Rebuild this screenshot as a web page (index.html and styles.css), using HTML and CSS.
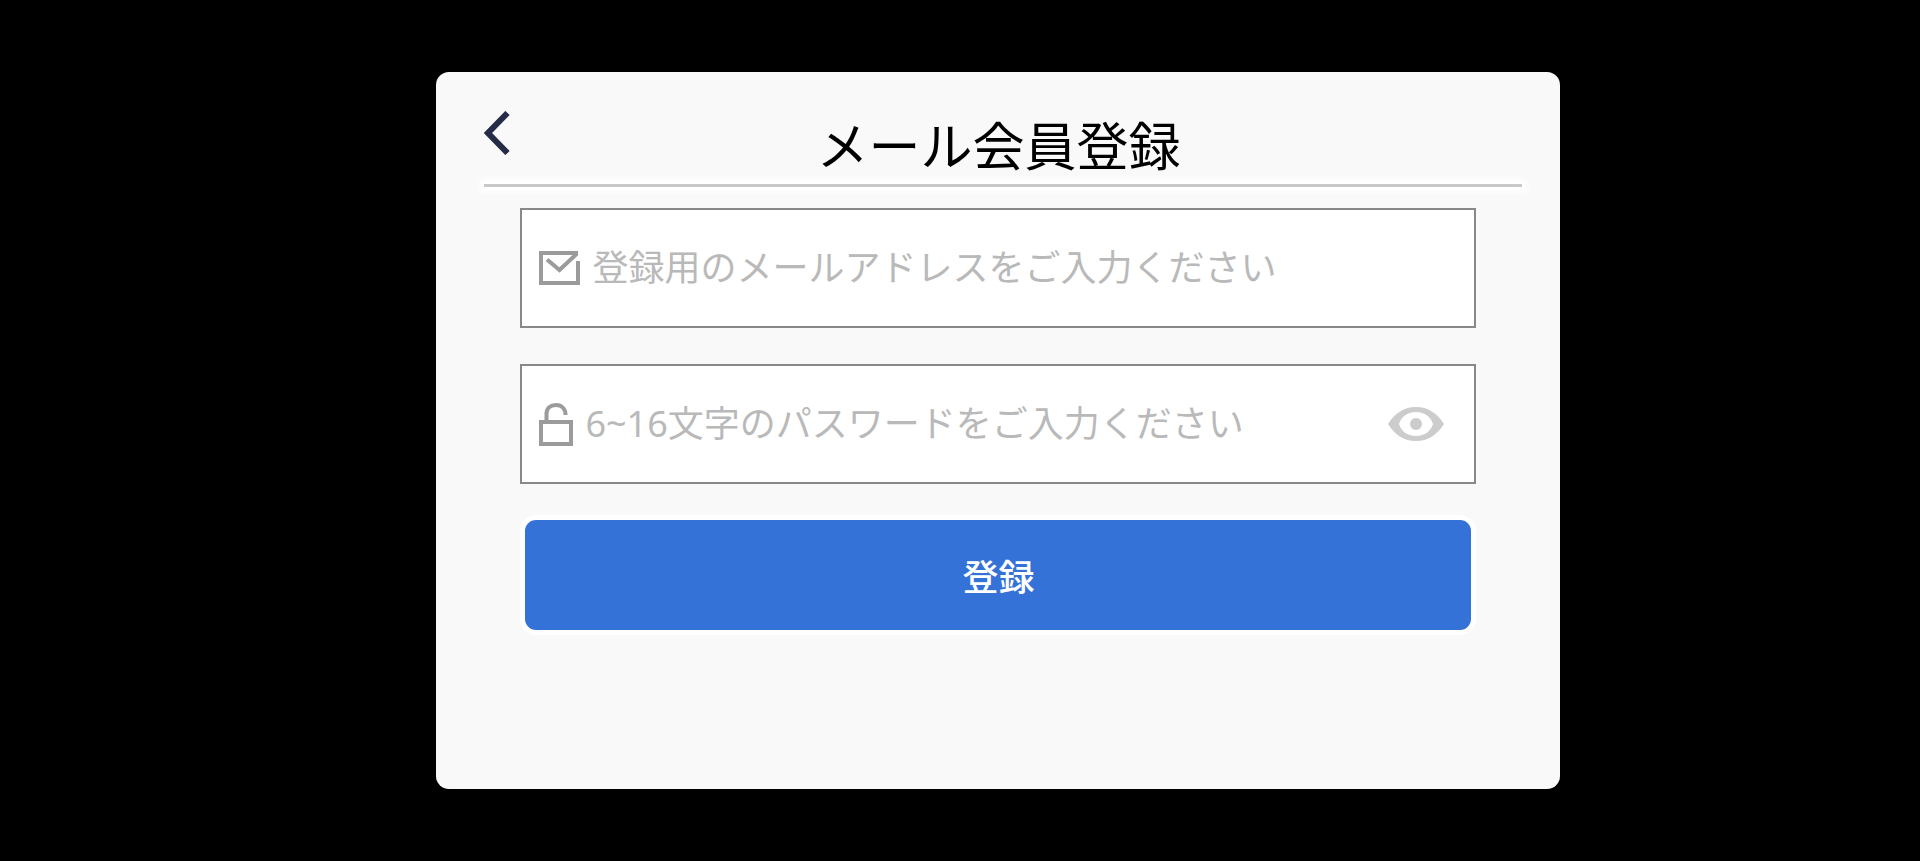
FILE: index.html
```html
<!DOCTYPE html>
<html lang="ja">
<head>
    <meta charset="UTF-8">
    <meta name="viewport" content="width=device-width, initial-scale=1.0">
    <title>メール会員登録</title>
    <link rel="stylesheet" href="styles.css">
</head>
<body>
    <main class="dialog">
        <header class="dialog-header">
            <button type="button" class="back-btn" aria-label="戻る">
                <svg width="26" height="44" viewBox="0 0 26 44">
                    <path d="M23.5 2 L4 22 L23.5 42" fill="none" stroke="#262b47" stroke-width="6"/>
                </svg>
            </button>
            <h1>メール会員登録</h1>
        </header>
        <hr class="divider">

        <form class="register-form">
            <!-- Mail address -->
            <div class="field">
                <label for="email" aria-label="メールアドレス">
                    <svg width="41" height="34" viewBox="0 0 41 34" fill="none" stroke="#9b9b9b" stroke-width="4">
                        <path d="M39 2 H2 V32 H39 V10"/>
                        <path d="M8 8.5 L20.5 19 L38 2.5"/>
                    </svg>
                </label>
                <input type="email" id="email" placeholder="登録用のメールアドレスをご入力ください">
            </div>

            <!-- Password -->
            <div class="field">
                <label for="password" aria-label="パスワード">
                    <svg width="34" height="43" viewBox="0 0 34 43" fill="none" stroke="#9b9b9b" stroke-width="4">
                        <rect x="2" y="19" width="30" height="22"/>
                        <path d="M7.5 18 V11 C7.5 5 11.5 2 17 2 C23 2 26.5 6 26.5 12"/>
                    </svg>
                </label>
                <input type="password" id="password" placeholder="6~16文字のパスワードをご入力ください">
                <button type="button" class="eye-btn" aria-label="パスワードを表示">
                    <svg width="56" height="34" viewBox="0 0 56 34" fill="#ccc">
                        <path fill-rule="evenodd" d="M0 17 C7 6 16 0 28 0 C40 0 49 6 56 17 C49 28 40 34 28 34 C16 34 7 28 0 17 Z M11 17 C13 24 19 29 28 29 C37 29 43 24 45 17 C43 10 37 5 28 5 C19 5 13 10 11 17 Z"/>
                        <circle cx="28" cy="17" r="6"/>
                    </svg>
                </button>
            </div>

            <button type="submit" class="submit-btn">登録</button>
        </form>
    </main>
</body>
</html>
```

FILE: styles.css
```css
:root {
    --card-color: #f9f9f9;
    --primary-color: #3572d8;
    --border-color: #888;
    --line-color: #c9c9cb;
    --placeholder-color: #b9b9b9;
}

* {
    margin: 0;
    padding: 0;
    box-sizing: border-box;
    font-family: "Noto Sans", "Noto Sans CJK JP", sans-serif;
}

body {
    min-height: 100vh;
    display: flex;
    align-items: center;
    justify-content: center;
    padding: 0 0 0 4%;
    background: #000;
}

.dialog {
    width: 61%;
    max-width: 1124px;
    padding: 36px 0 159px;
    background: var(--card-color);
    border-radius: 13px;
}

.dialog-header {
    display: grid;
    grid-template-columns: 52px 1fr 62px;
    align-items: start;
    margin: 0 38px 0 48px;
}

.dialog-header h1 {
    font-size: 52px;
    line-height: 76px;
    font-weight: 400;
    text-align: center;
    color: #000;
}

.divider {
    height: 3px;
    margin: 0 38px 0 48px;
    border: none;
    background: var(--line-color);
    box-shadow: 0 0 6px 5px #fff;
}

.back-btn,
.eye-btn {
    border: none;
    background: none;
    cursor: pointer;
}

.back-btn {
    padding-top: 3px;
    text-align: left;
}

svg {
    display: block;
}

.register-form {
    display: flex;
    flex-direction: column;
    gap: 36px;
    padding: 21px 84px 0;
}

.field {
    display: flex;
    align-items: center;
    gap: 12px;
    height: 120px;
    padding: 0 30px 0 17px;
    background: #fff;
    border: 2px solid var(--border-color);
}

.field input {
    flex: 1;
    min-width: 0;
    border: none;
    outline: none;
    background: transparent;
    font-size: 36px;
    line-height: 52px;
    color: #333;
}

.field input::placeholder {
    color: var(--placeholder-color);
    opacity: 1;
}

.submit-btn {
    height: 110px;
    margin: 0 5px;
    border: none;
    border-radius: 11px;
    background: var(--primary-color);
    box-shadow: 0 0 0 5px #fff;
    color: #fff;
    font-size: 36px;
    font-weight: 500;
    cursor: pointer;
}
```
